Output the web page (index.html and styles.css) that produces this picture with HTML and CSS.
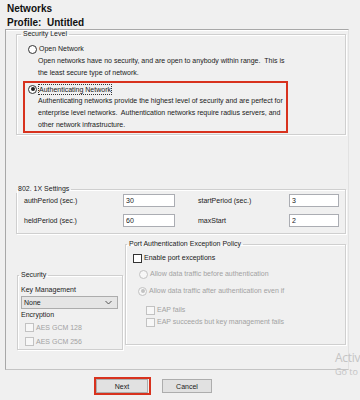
FILE: index.html
```html
<!DOCTYPE html>
<html lang="en">
<head>
    <meta charset="UTF-8">
    <meta name="viewport" content="width=device-width, initial-scale=1.0">
    <title>Networks</title>
    <link rel="stylesheet" href="styles.css">
</head>
<body>

    <div class="title">
        <h1>Networks</h1>
        <h2>Profile:&nbsp; Untitled</h2>
    </div>

    <div class="panel">
        <fieldset class="group level">
            <legend>Security Level</legend>

            <div class="option">
                <label class="line"><input type="radio" name="level"> Open Network</label>
                <p class="desc">Open networks have no security, and are open to anybody within range.&nbsp; This is<br>the least secure type of network.</p>
            </div>

            <div class="option picked">
                <label class="line"><input type="radio" name="level" checked> <span class="focus">Authenticating Network</span></label>
                <p class="desc">Authenticating networks provide the highest level of security and are perfect for<br>enterprise level networks.&nbsp; Authentication networks require radius servers, and<br>other network infrastructure.</p>
            </div>
        </fieldset>

        <fieldset class="group dot1x">
            <legend>802. 1X Settings</legend>
            <div class="grid">
                <label>authPeriod (sec.)</label>
                <input type="text" value="30">
                <label>startPeriod (sec.)</label>
                <input type="text" value="3">
                <label>heldPeriod (sec.)</label>
                <input type="text" value="60">
                <label>maxStart</label>
                <input type="text" value="2">
            </div>
        </fieldset>

        <div class="lower">
            <fieldset class="group security">
                <legend>Security</legend>
                <div class="caption">Key Management</div>
                <div class="select">
                    <span>None</span>
                    <svg width="7" height="5" viewBox="0 0 7 5"><polyline points="0.5,1 3.5,4 6.5,1" fill="none" stroke="#555" stroke-width="1"/></svg>
                </div>
                <div class="caption enc">Encryption</div>
                <label class="line off box-row"><input type="checkbox" disabled> AES GCM 128</label>
                <label class="line off box-row"><input type="checkbox" disabled> AES GCM 256</label>
            </fieldset>

            <fieldset class="group port">
                <legend>Port Authentication Exception Policy</legend>
                <label class="line enable"><input type="checkbox"> Enable port exceptions</label>
                <label class="line off before"><input type="radio" name="allow" disabled> Allow data traffic before authentication</label>
                <label class="line off after"><input type="radio" name="allow" checked disabled> Allow data traffic after authentication even if</label>
                <label class="line off eap first"><input type="checkbox" disabled> EAP fails</label>
                <label class="line off eap"><input type="checkbox" disabled> EAP succeeds but key management fails</label>
            </fieldset>
        </div>
    </div>

    <div class="actions">
        <span class="mark"><button>Next</button></span>
        <button class="cancel">Cancel</button>
    </div>

    <div class="watermark">
        <div class="big">Activ</div>
        <div class="small">Go to</div>
    </div>

</body>
</html>
```

FILE: styles.css
```css
body {
    margin: 0;
    background-color: #f0f0f0;
    font-family: "Liberation Sans", Arial, sans-serif;
    font-size: 7px;
    color: #1a1a1a;
    width: 360px;
    height: 400px;
    overflow: hidden;
    position: relative;
}
.title {
    padding: 2px 0 0 7px;
    height: 29px;
    box-sizing: border-box;
}
.title h1, .title h2 {
    margin: 0;
    font-size: 10px;
    font-weight: bold;
    line-height: 13px;
    color: #111;
}
.title h2 {
    margin-top: 1px;
}

/* main area under the title */
.panel {
    margin-left: 5px;
    width: 344px;
    box-sizing: border-box;
    border-top: 1px solid #a8a8a8;
    border-left: 1px solid #a8a8a8;
    border-bottom: 1px solid #c4c4c4;
    border-right: 1px solid #e2e2e2;
    box-shadow: inset 0 1px 0 #fff;
    padding: 0 2px 19px 10px;
}
.group {
    margin: 0;
    padding: 0;
    min-width: 0;
    border: 1px solid #cfcfcf;
    box-shadow: inset 1px 1px 0 #fff, 1px 1px 0 #fff;
}
.group legend {
    font-size: 7px;
    line-height: 8px;
    padding: 0 2px;
    color: #1a1a1a;
}

.level {
    padding: 3px 0 1px 6px;
}
.level legend {
    margin-left: -2px;
}
.option {
    width: 265px;
    box-sizing: border-box;
    border: 2px solid transparent;
    padding-left: 3px;
}
.option.picked {
    border-color: #d8321e;
}
.line {
    display: flex;
    align-items: center;
    gap: 2px;
    line-height: 12px;
    height: 12px;
    white-space: nowrap;
}
.desc {
    margin: 0;
    padding-left: 10px;
    line-height: 12px;
    white-space: nowrap;
}
.focus {
    outline: 1px dotted #333;
    outline-offset: 0;
    line-height: 9px;
}

input[type="radio"], input[type="checkbox"] {
    appearance: none;
    -webkit-appearance: none;
    margin: 0;
    width: 9px;
    height: 9px;
    box-sizing: border-box;
    border: 1px solid #333;
    background-color: #fff;
    flex: none;
    position: relative;
}
input[type="radio"] {
    border-radius: 50%;
}
input[type="radio"]:checked::after {
    content: "";
    position: absolute;
    left: 1.5px;
    top: 1.5px;
    width: 4px;
    height: 4px;
    border-radius: 50%;
    background-color: #222;
}
input:disabled {
    border-color: #c2c2c2 !important;
    background-color: #f7f7f7 !important;
}
input[type="radio"]:disabled:checked::after {
    background-color: #c2c2c2;
}
.off {
    color: #a2a2a2;
}

/* 802.1X */
.dot1x {
    margin-top: 50px;
    padding: 1px 8px 6px 7px;
}
.dot1x legend {
    margin-left: -8px;
}
.grid {
    display: grid;
    grid-template-columns: 99px 52px 114px 50px;
    row-gap: 7px;
    align-items: center;
}
.grid label:nth-of-type(2n) {
    margin-left: 23px;
}
.grid input {
    width: 100%;
    height: 13px;
    box-sizing: border-box;
    margin: 0;
    border: 1px solid #abadb3;
    background-color: #fff;
    font-family: inherit;
    font-size: 7px;
    padding: 0 2px;
    color: #1a1a1a;
}

/* security + port */
.lower {
    display: flex;
    align-items: flex-start;
    margin-top: 6px;
}
.security {
    width: 106px;
    box-sizing: border-box;
    margin: 31px 0 0 1px;
    padding: 6px 4px 1px 3px;
}
.security legend {
    margin-left: -2px;
}
.caption {
    line-height: 10px;
}
.caption.enc {
    line-height: 11px;
}
.select {
    margin-top: 1px;
    height: 13px;
    box-sizing: border-box;
    border: 1px solid #acacac;
    background-color: #e5e5e5;
    display: flex;
    align-items: center;
    justify-content: space-between;
    padding: 0 5px 0 2px;
}
.box-row {
    margin-top: 1px;
    height: 13px;
    padding-left: 4px;
}
.port {
    flex: 1;
    margin-left: 2px;
    padding: 4px 4px 16px 7px;
}
.port legend {
    margin-left: -6px;
}
.port .before {
    margin-top: 4px;
    padding-left: 6px;
}
.port .after {
    margin-top: 5px;
    padding-left: 5px;
}
.port .eap {
    padding-left: 13px;
}
.port .eap.first {
    margin-top: 7px;
}

/* bottom buttons */
.actions {
    display: flex;
    align-items: center;
    padding: 7px 0 0 94px;
}
.mark {
    display: inline-flex;
    border: 2px solid #d8321e;
    padding-right: 1px;
}
.actions button {
    width: 52px;
    height: 14px;
    margin: 0;
    padding: 0;
    border: 1px solid #adadad;
    background-color: #e1e1e1;
    font-family: inherit;
    font-size: 7px;
    color: #1a1a1a;
}
.actions .cancel {
    width: 50px;
    margin-left: 11px;
}

/* windows activation text over the page */
.watermark {
    position: absolute;
    left: 335px;
    top: 350px;
    color: #c4c4c4;
    white-space: nowrap;
    font-family: "Open Sans", sans-serif;
}
.watermark .big {
    font-size: 12px;
    line-height: 15px;
    letter-spacing: -0.3px;
}
.watermark .small {
    margin-top: 2px;
    font-size: 9px;
    line-height: 10px;
}
```
